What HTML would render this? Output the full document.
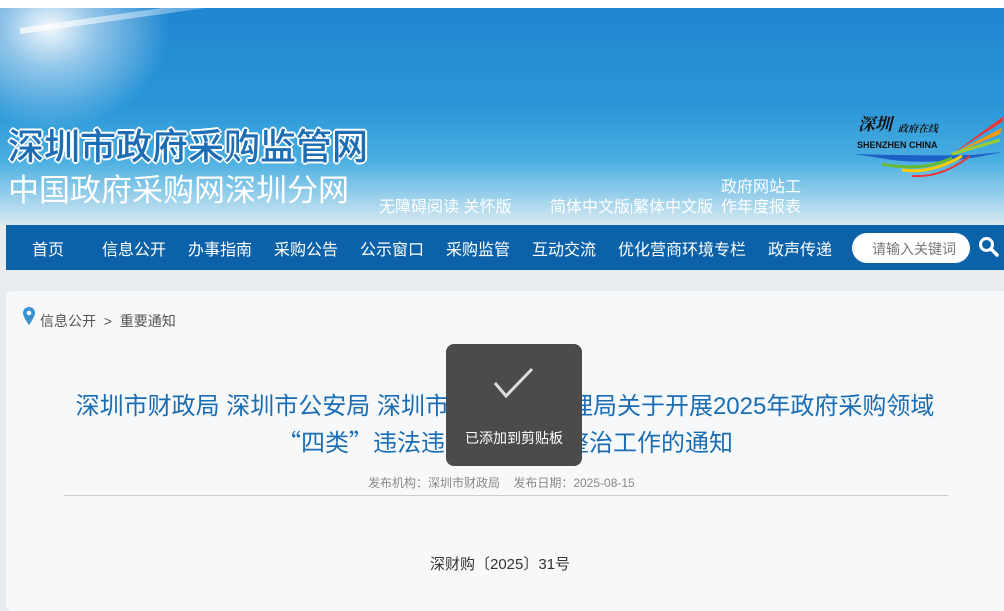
<!DOCTYPE html>
<html><head><meta charset="utf-8"><style>
*{margin:0;padding:0;box-sizing:border-box}
body{width:1004px;height:595px;overflow:hidden;background:#e8ecee;font-family:"Liberation Sans","Noto Sans CJK SC",sans-serif;position:relative}
.top{position:absolute;left:0;top:0;width:1004px;height:8px;background:#fff}
.banner{position:absolute;left:0;top:8px;width:1004px;height:217px;background:linear-gradient(180deg,#1f86d0 0%,#2a96d8 45%,#49aee0 70%,#9fd2ec 88%,#d9e9f0 100%);overflow:hidden}
.sun{position:absolute;left:-80px;top:-90px;width:260px;height:220px;background:radial-gradient(ellipse at center,rgba(255,255,255,.95) 0%,rgba(255,255,255,.5) 25%,rgba(255,255,255,0) 65%)}
.ray{position:absolute;left:20px;top:20px;width:300px;height:6px;background:linear-gradient(90deg,rgba(255,255,255,.7),rgba(255,255,255,0));transform:rotate(-8deg);transform-origin:left}
.t1{position:absolute;left:8px;top:110px;font-size:36px;color:#1d6db5;font-weight:500;text-shadow:-2px 0 #fff,2px 0 #fff,0 2px #fff,0 -2px #fff,1px 1px #fff,-1px -1px #fff,1px -1px #fff,-1px 1px #fff}
.t2{position:absolute;left:8px;top:157px;font-size:31px;color:#fff}
.lk{position:absolute;color:#fff;font-size:16px}
.nav{position:absolute;left:6px;top:225px;width:998px;height:45px;background:#0c62a9}
.nav span{position:absolute;top:11px;color:#fff;font-size:16px}
.search{position:absolute;left:852px;top:233px;width:118px;height:30px;background:#fff;border-radius:15px;color:#777;font-size:14px;padding:6px 0 0 20px}
.panel{position:absolute;left:6px;top:291px;width:1010px;height:320px;background:#f7f8fa;border-radius:6px}
.crumb{position:absolute;left:40px;top:311px;font-size:14px;color:#555}
.title{position:absolute;left:0;width:1010px;text-align:center;font-size:24px;color:#1a6db3}
.meta{position:absolute;left:368px;top:474px;font-size:12px;color:#888}
.hr{position:absolute;left:64px;top:495px;width:884px;height:1px;background:#ccc}
.doc{position:absolute;left:430px;top:553px;font-size:15px;color:#333}
.toast{position:absolute;left:446px;top:344px;width:136px;height:122px;background:#4b4b4b;border-radius:8px}
.toast div{position:absolute;top:84px;width:136px;text-align:center;color:#fff;font-size:14px}
</style></head><body>
<div class="top"></div>
<div class="banner">
<div class="sun"></div><div class="ray"></div>
<div class="t1">深圳市政府采购监管网</div>
<div class="t2">中国政府采购网深圳分网</div>
<div class="lk" style="left:379px;top:185px">无障碍阅读 关怀版</div>
<div class="lk" style="left:550px;top:185px">简体中文版<span style="font-size:12px">|</span>繁体中文版</div>
<div class="lk" style="left:721px;top:165px">政府网站工</div>
<div class="lk" style="left:721px;top:185px">作年度报表</div>
<svg style="position:absolute;left:852px;top:104px" width="152" height="70" viewBox="0 0 152 70">
<text x="6" y="18" font-size="17" font-style="italic" font-weight="bold" fill="#111" font-family="Noto Serif CJK SC,serif">深圳</text>
<text x="46" y="20" font-size="10" font-style="italic" font-weight="bold" fill="#111" font-family="Noto Serif CJK SC,serif">政府在线</text>
<text x="5" y="36" font-size="9" font-weight="bold" fill="#111">SHENZHEN  CHINA</text>
<path d="M2 42 Q60 44 120 43 L150 40 Q90 54 40 48 Z" fill="#1f5fc8"/>
<path d="M100 42 L152 4 L150 10 Z" fill="#e33"/>
<path d="M100 42 L150 16 L148 22 Z" fill="#f90"/>
<path d="M100 42 L148 28" stroke="#9c3" stroke-width="3"/>
<path d="M30 52 Q70 60 100 46" stroke="#6b3" stroke-width="3" fill="none"/>
<path d="M50 58 Q80 62 110 44" stroke="#fc0" stroke-width="3" fill="none"/>
<path d="M60 64 Q90 66 118 44" stroke="#e33" stroke-width="2" fill="none"/>
</svg>
</div>
<div class="nav">
<span style="left:26px">首页</span><span style="left:96px">信息公开</span><span style="left:182px">办事指南</span><span style="left:268px">采购公告</span><span style="left:354px">公示窗口</span><span style="left:440px">采购监管</span><span style="left:526px">互动交流</span><span style="left:612px">优化营商环境专栏</span><span style="left:762px">政声传递</span>
</div>
<div class="search">请输入关键词</div>
<svg style="position:absolute;left:978px;top:236px" width="22" height="22" viewBox="0 0 22 22"><circle cx="8.5" cy="8.5" r="6" stroke="#fff" stroke-width="3" fill="none"/><path d="M13 13 L19 19" stroke="#fff" stroke-width="3.5" stroke-linecap="round"/></svg>
<div class="panel"></div>
<svg style="position:absolute;left:23px;top:307px" width="12" height="18" viewBox="0 0 12 18"><path d="M6 0 C2.5 0 0 2.5 0 6 C0 10 6 18 6 18 C6 18 12 10 12 6 C12 2.5 9.5 0 6 0Z" fill="#3a93d0"/><circle cx="6" cy="6" r="2.3" fill="#f7f8fa"/></svg>
<div class="crumb">信息公开 &nbsp;&gt;&nbsp; 重要通知</div>
<div class="title" style="top:386px">深圳市财政局 深圳市公安局 深圳市市场监督管理局关于开展2025年政府采购领域</div>
<div class="title" style="top:423px;font-family:'Noto Sans CJK SC',sans-serif">“四类”违法违规行为专项整治工作的通知</div>
<div class="meta">发布机构：深圳市财政局 &nbsp;&nbsp; 发布日期：2025-08-15</div>
<div class="hr"></div>
<div class="doc">深财购〔2025〕31号</div>
<div class="toast"><svg style="position:absolute;left:46px;top:22px" width="44" height="34" viewBox="0 0 44 34"><path d="M3 17 L14 30 L40 3" stroke="#ddd" stroke-width="3" fill="none"/></svg><div>已添加到剪贴板</div></div>
</body></html>
